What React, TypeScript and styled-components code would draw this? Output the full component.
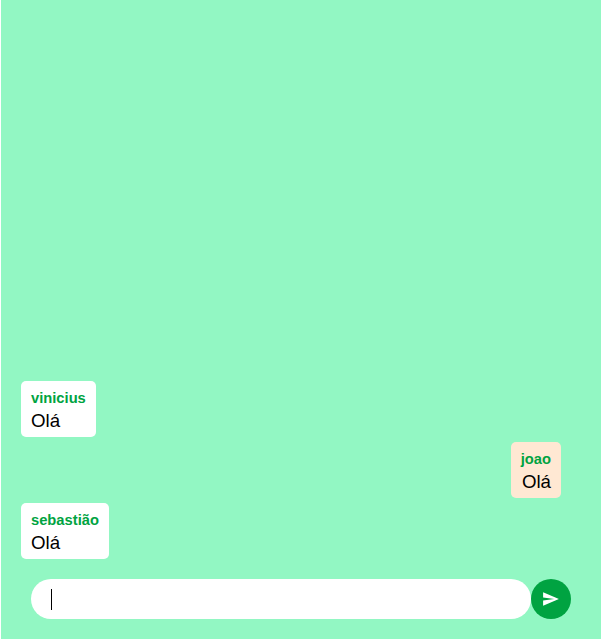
import React from "react";
import styled, { createGlobalStyle } from "styled-components";

const GlobalStyle = createGlobalStyle`
  * { box-sizing: border-box; }
  body { margin: 0; background: #fff; font-family: "Liberation Sans", Arial, sans-serif; }
`;

const Chat = styled.main`
  width: 600px;
  height: 639px;
  margin-left: 1px;
  display: flex;
  flex-direction: column;
  background: #92f7c3;
`;

const Messages = styled.section`
  flex: 1;
  display: flex;
  flex-direction: column;
  justify-content: flex-end;
  gap: 5px;
  padding: 0 40px 20px 20px;
`;

const Message = styled.article<{ $own?: boolean }>`
  height: 56px;
  padding: 9px 10px 0;
  border-radius: 5px;
  align-self: ${(p) => (p.$own ? "flex-end" : "flex-start")};
  text-align: ${(p) => (p.$own ? "right" : "left")};
  background: ${(p) => (p.$own ? "#ffe8d3" : "#fff")};
`;

const Author = styled.div`
  font-size: 14.72px;
  font-weight: bold;
  line-height: 17px;
  color: #00a341;
`;

const Text = styled.div`
  margin-top: 3px;
  font-size: 18.72px;
  line-height: 22px;
  color: #000;
`;

const Composer = styled.form`
  display: flex;
  padding: 0 30px 20px;
`;

const Field = styled.div`
  width: 500px;
  height: 40px;
  padding: 0 20px;
  display: flex;
  align-items: center;
  border-radius: 20px;
  background: #fff;
`;

const Caret = styled.span`
  width: 1px;
  height: 21px;
  background: #000;
`;

const Send = styled.button`
  width: 40px;
  height: 40px;
  padding: 0;
  border: 0;
  border-radius: 50%;
  display: flex;
  align-items: center;
  justify-content: center;
  background: #00a341;
  color: #fff;
`;

const messages = [
  { author: "vinicius", text: "Olá" },
  { author: "joao", text: "Olá", own: true },
  { author: "sebastião", text: "Olá" },
];

export default function App() {
  return (
    <>
      <GlobalStyle />
      <Chat>
        <Messages>
          {messages.map((m) => (
            <Message key={m.author} $own={m.own}>
              <Author>{m.author}</Author>
              <Text>{m.text}</Text>
            </Message>
          ))}
        </Messages>
        <Composer>
          <Field role="textbox"><Caret /></Field>
          <Send type="button" aria-label="Enviar">
            <svg width="18" height="18" viewBox="0 0 18 18" fill="currentColor">
              <path d="M1.1 15.8 16.9 9 1.1 2.2V7.5L12.3 9 1.1 10.5z" />
            </svg>
          </Send>
        </Composer>
      </Chat>
    </>
  );
}
